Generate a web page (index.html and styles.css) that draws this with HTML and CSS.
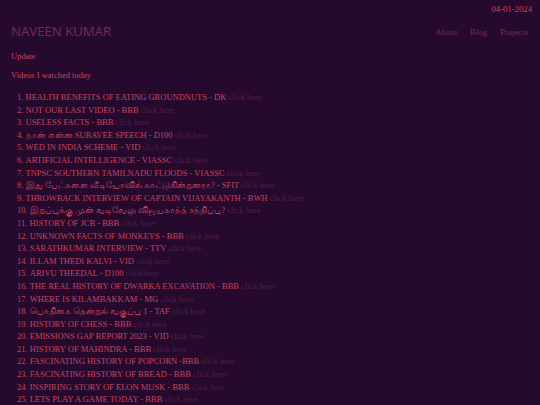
FILE: index.html
```html
<!DOCTYPE html>
<html lang="en">
<head>
<meta charset="utf-8">
<title>Naveen Kumar</title>
<link rel="stylesheet" href="styles.css">
</head>
<body>
<div class="topbar"><span class="date">04-01-2024</span></div>
<header class="header">
  <h1 class="brand">NAVEEN KUMAR</h1>
  <nav class="nav">
    <a href="#">About</a>
    <a href="#">Blog</a>
    <a href="#">Projects</a>
  </nav>
</header>
<main class="main">
  <p class="label">Update</p>
  <p class="label">Videos I watched today</p>
  <ol class="videos">
    <li>HEALTH BENEFITS OF EATING GROUNDNUTS - DK <a href="#">click here</a></li>
    <li>NOT OUR LAST VIDEO - BBB <a href="#">click here</a></li>
    <li>USELESS FACTS - BBB <a href="#">click here</a></li>
    <li>நான் என்ன SUBAVEE SPEECH - D100 <a href="#">click here</a></li>
    <li>WED IN INDIA SCHEME - VID <a href="#">click here</a></li>
    <li>ARTIFICIAL INTELLIGENCE - VIASSC <a href="#">click here</a></li>
    <li>TNPSC SOUTHERN TAMILNADU FLOODS - VIASSC <a href="#">click here</a></li>
    <li>இது பேட்களை வீடியோவில் காட்டுகின்றனரா? - SFIT <a href="#">click here</a></li>
    <li>THROWBACK INTERVIEW OF CAPTAIN VIJAYAKANTH - BWH <a href="#">click here</a></li>
    <li>இறப்புக்கு முன் வடிவேலு விஜயகாந்த் சந்திப்பு? <a href="#">click here</a></li>
    <li>HISTORY OF JCB - BBB <a href="#">click here</a></li>
    <li>UNKNOWN FACTS OF MONKEYS - BBB <a href="#">click here</a></li>
    <li>SARATHKUMAR INTERVIEW - TTV <a href="#">click here</a></li>
    <li>ILLAM THEDI KALVI - VID <a href="#">click here</a></li>
    <li>ARIVU THEEDAL - D100 <a href="#">click here</a></li>
    <li>THE REAL HISTORY OF DWARKA EXCAVATION - BBB <a href="#">click here</a></li>
    <li>WHERE IS KILAMBAKKAM - MG <a href="#">click here</a></li>
    <li>பொதிகை தென்றல் வகுப்பு 1 - TAF <a href="#">click here</a></li>
    <li>HISTORY OF CHESS - BBB <a href="#">click here</a></li>
    <li>EMISSIONS GAP REPORT 2023 - VID <a href="#">click here</a></li>
    <li>HISTORY OF MAHINDRA - BBB <a href="#">click here</a></li>
    <li>FASCINATING HISTORY OF POPCORN -BBB <a href="#">click here</a></li>
    <li>FASCINATING HISTORY OF BREAD - BBB <a href="#">click here</a></li>
    <li>INSPIRING STORY OF ELON MUSK - BBB <a href="#">click here</a></li>
    <li>LETS PLAY A GAME TODAY - BBB <a href="#">click here</a></li>
  </ol>
</main>
</body>
</html>
```
FILE: styles.css
```css
html, body {
  margin: 0;
  padding: 0;
  background: #260a2e;
}
body {
  font-family: "Liberation Serif", "Noto Sans CJK SC", serif;
  color: #c8445e;
  font-size: 8.5px;
  min-height: 405px;
}
.topbar {
  display: flex;
  justify-content: flex-end;
  padding: 3px 8px 0 0;
  height: 12px;
  line-height: 12px;
}
.date {
  font-size: 8.7px;
  color: #c8445e;
}
.header {
  display: flex;
  justify-content: space-between;
  align-items: center;
  padding: 7px 12px 0 11px;
}
.brand {
  margin: 0;
  font-family: "Open Sans", sans-serif;
  font-weight: 400;
  font-size: 13.2px;
  line-height: 18px;
  color: #7a2a4e;
}
.nav {
  display: flex;
  gap: 13px;
  padding-top: 2px;
}
.nav a {
  color: #7a2a4e;
  text-decoration: none;
  font-size: 8.7px;
}
.main {
  padding: 3px 0 0 11px;
}
.label {
  margin: 7px 0 0;
  line-height: 12px;
}
.videos {
  margin: 10px 0 0;
  padding: 0 0 0 6px;
  list-style-position: inside;
  line-height: 12.6px;
}
.videos a {
  color: #4e1e44;
  text-decoration: none;
}
```
